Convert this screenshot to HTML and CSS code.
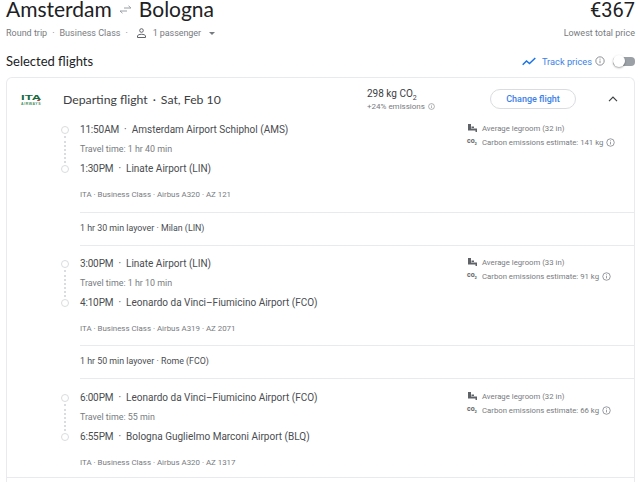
FILE: index.html
```html
<!DOCTYPE html>
<html lang="en">
<head>
    <meta charset="UTF-8" />
    <meta name="viewport" content="width=device-width, initial-scale=1.0"/>
    <title>Amsterdam to Bologna - Flights</title>
    <link rel="stylesheet" href="styles.css">
</head>
<body>

<svg class="defs" width="0" height="0" aria-hidden="true">
    <symbol id="info" viewBox="0 0 12 12">
        <circle cx="6" cy="6" r="5" fill="none" stroke="currentColor" stroke-width="1"/>
        <path d="M6 5.400v3.200M6 3.200v1.200" fill="none" stroke="currentColor" stroke-width="1"/>
    </symbol>
    <symbol id="seat" viewBox="0 0 9 8">
        <path d="M0 0h3v4.500h6V8H7.500V6.500H0z" fill="currentColor"/>
        <path d="M3.500 2.500H6V4H3.500z" fill="currentColor"/>
    </symbol>
</svg>

<header class="top-row">
    <h1 class="route">
        <span>Amsterdam</span>
        <svg class="swap" width="13" height="9" viewBox="0 0 13 9">
            <path d="M5 3h7M9.500.8 12 3M8 6H1M3.500 8.200 1 6" fill="none" stroke="#9aa0a6" stroke-width="1"/>
        </svg>
        <span>Bologna</span>
    </h1>
    <div class="price">€367</div>
</header>

<div class="sub-row">
    <div class="trip-opts">
        <span>Round trip</span><span class="dot">·</span>
        <span>Business Class</span><span class="dot">·</span>
        <svg class="person" width="9" height="10" viewBox="0 0 9 10">
            <circle cx="4.500" cy="2.500" r="1.800" fill="none" stroke="#5f6368" stroke-width="1"/>
            <path d="M.5 9.500V8c0-1 2-1.700 4-1.700s4 .7 4 1.700v1.500z" fill="none" stroke="#5f6368" stroke-width="1"/>
        </svg>
        <span class="pax">1 passenger</span>
        <span class="caret"></span>
    </div>
    <div>Lowest total price</div>
</div>

<div class="section-row">
    <h2 class="section-title">Selected flights</h2>
    <div class="track">
        <svg width="14" height="9" viewBox="0 0 14 9">
            <path d="M.7 7.800 4.500 4l3 2.600L13.300 1" fill="none" stroke="#1a73e8" stroke-width="1.500"/>
        </svg>
        <span class="track-label">Track prices</span>
        <svg class="info-sm" width="10" height="10"><use href="#info"/></svg>
        <span class="toggle"><span class="knob"></span></span>
    </div>
</div>

<main class="card">
    <div class="card-head">
        <div class="logo">
            <div class="logo-ita">ITA<span class="logo-tip"></span></div>
            <div class="logo-sub">AIRWAYS</div>
        </div>
        <div class="head-title">Departing flight<span class="dot">·</span>Sat, Feb 10</div>
        <div class="emissions">
            <div class="co2-total">298 kg CO<sub>2</sub></div>
            <div class="co2-diff">+24% emissions <svg width="7" height="7"><use href="#info"/></svg></div>
        </div>
        <button class="change-btn">Change flight</button>
        <svg class="chevron" width="10" height="6" viewBox="0 0 10 6">
            <path d="M1 5.200 5 1.200l4 4" fill="none" stroke="#3c4043" stroke-width="1.200"/>
        </svg>
    </div>

    <section class="leg">
        <div class="leg-main">
            <div class="timeline">
                <span class="stop"></span>
                <span class="dots"></span>
                <span class="stop"></span>
            </div>
            <div class="leg-text">
                <div class="place"><span class="time">11:50 AM</span><span class="dot">·</span>Amsterdam Airport Schiphol (AMS)</div>
                <div class="travel">Travel time: 1 hr 40 min</div>
                <div class="place"><span class="time">1:30 PM</span><span class="dot">·</span>Linate Airport (LIN)</div>
            </div>
            <div class="leg-info">
                <div class="info-row">
                    <svg class="info-ico" width="9" height="8"><use href="#seat"/></svg>Average legroom (32 in)
                </div>
                <div class="info-row">
                    <span class="co2-ico">co<sub>2</sub></span>Carbon emissions estimate: 141 kg
                    <svg class="info-sm" width="9" height="9"><use href="#info"/></svg>
                </div>
            </div>
        </div>
        <div class="leg-meta">ITA · Business Class · Airbus A320 · AZ 121</div>
    </section>

    <div class="layover">1 hr 30 min layover · Milan (LIN)</div>

    <section class="leg leg-mid">
        <div class="leg-main">
            <div class="timeline">
                <span class="stop"></span>
                <span class="dots"></span>
                <span class="stop"></span>
            </div>
            <div class="leg-text">
                <div class="place"><span class="time">3:00 PM</span><span class="dot">·</span>Linate Airport (LIN)</div>
                <div class="travel">Travel time: 1 hr 10 min</div>
                <div class="place"><span class="time">4:10 PM</span><span class="dot">·</span>Leonardo da Vinci–Fiumicino Airport (FCO)</div>
            </div>
            <div class="leg-info">
                <div class="info-row">
                    <svg class="info-ico" width="9" height="8"><use href="#seat"/></svg>Average legroom (33 in)
                </div>
                <div class="info-row">
                    <span class="co2-ico">co<sub>2</sub></span>Carbon emissions estimate: 91 kg
                    <svg class="info-sm" width="9" height="9"><use href="#info"/></svg>
                </div>
            </div>
        </div>
        <div class="leg-meta">ITA · Business Class · Airbus A319 · AZ 2071</div>
    </section>

    <div class="layover">1 hr 50 min layover · Rome (FCO)</div>

    <section class="leg leg-last">
        <div class="leg-main">
            <div class="timeline">
                <span class="stop"></span>
                <span class="dots"></span>
                <span class="stop"></span>
            </div>
            <div class="leg-text">
                <div class="place"><span class="time">6:00 PM</span><span class="dot">·</span>Leonardo da Vinci–Fiumicino Airport (FCO)</div>
                <div class="travel">Travel time: 55 min</div>
                <div class="place"><span class="time">6:55 PM</span><span class="dot">·</span>Bologna Guglielmo Marconi Airport (BLQ)</div>
            </div>
            <div class="leg-info">
                <div class="info-row">
                    <svg class="info-ico" width="9" height="8"><use href="#seat"/></svg>Average legroom (32 in)
                </div>
                <div class="info-row">
                    <span class="co2-ico">co<sub>2</sub></span>Carbon emissions estimate: 66 kg
                    <svg class="info-sm" width="9" height="9"><use href="#info"/></svg>
                </div>
            </div>
        </div>
        <div class="leg-meta">ITA · Business Class · Airbus A320 · AZ 1317</div>
    </section>

    <div class="card-foot"></div>
</main>

</body>
</html>
```

FILE: styles.css
```css
:root {
    --text: #202124;
    --body: #4a4d51;
    --dim: #777b80;
    --line: #e8eaed;
    --blue: #3b7fe8;
}

* {
    box-sizing: border-box;
    margin: 0;
    padding: 0;
}

html, body {
    width: 100%;
    height: 482px;
    overflow: hidden;
    background: #fff;
    font-family: Roboto, Arial, sans-serif;
    color: var(--text);
}

body {
    padding: 0 5px 0 6px;
}

.defs {
    display: block;
    height: 0;
}

.dot {
    margin: 0 5px;
}

/* top rows */
.top-row {
    display: flex;
    justify-content: space-between;
    align-items: flex-start;
    height: 22px;
}

.route {
    display: flex;
    align-items: center;
    gap: 7px;
    font-family: Lato, Roboto, sans-serif;
    font-size: 21px;
    font-weight: 400;
    line-height: 18px;
}

.price {
    font-size: 20px;
    line-height: 21px;
}

.sub-row {
    display: flex;
    justify-content: space-between;
    margin-top: 5px;
    height: 12px;
    font-size: 9px;
    line-height: 12px;
    color: var(--dim);
}

.trip-opts {
    display: flex;
    align-items: center;
}

.person {
    margin: 0 7px 0 4px;
}

.pax {
    letter-spacing: -0.1px;
}

.caret {
    margin-left: 8px;
    border-left: 3px solid transparent;
    border-right: 3px solid transparent;
    border-top: 3px solid var(--dim);
}

.section-row {
    display: flex;
    justify-content: space-between;
    align-items: center;
    margin-top: 13px;
    height: 18px;
}

.section-title {
    font-family: Lato, Roboto, sans-serif;
    font-size: 13px;
    font-weight: 400;
}

.track {
    display: flex;
    align-items: center;
    font-size: 9.250px;
    color: var(--blue);
}

.track-label {
    margin: 0 3px 0 6px;
}

.info-sm {
    color: var(--dim);
    flex: none;
}

.toggle {
    position: relative;
    display: block;
    width: 22px;
    height: 9px;
    margin-left: 8px;
    border-radius: 4px;
    background: #9aa0a6;
}

.knob {
    position: absolute;
    left: 0;
    top: -2px;
    width: 12px;
    height: 12px;
    border-radius: 50%;
    background: #fff;
    box-shadow: 0 1px 2px rgba(0,0,0,0.35);
}

/* card */
.card {
    margin-top: 7px;
    border: 1px solid var(--line);
    border-bottom: none;
    border-radius: 6px 6px 0 0;
}

.card-head {
    display: flex;
    align-items: center;
    height: 35px;
    padding-top: 7px;
}

.logo {
    width: 56px;
    padding: 3px 0 0 14px;
    color: #0f6b3a;
}

.logo-ita {
    position: relative;
    width: 12px;
    font-family: "Liberation Sans", sans-serif;
    font-size: 7.500px;
    font-weight: 700;
    line-height: 6px;
    transform: scaleX(1.75);
    transform-origin: left center;
}

.logo-tip {
    position: absolute;
    right: 1.500px;
    bottom: 0;
    border-left: 1px solid transparent;
    border-right: 1px solid transparent;
    border-bottom: 2px solid #d0312d;
}

.logo-sub {
    margin-top: 1px;
    font-family: "Liberation Sans", sans-serif;
    font-size: 3.500px;
    font-weight: 700;
    line-height: 5px;
    letter-spacing: 0.600px;
    color: #3f8f5c;
}

.head-title {
    width: 304px;
    font-family: Lato, Roboto, sans-serif;
    font-size: 12.250px;
    color: #3c4043;
}

.emissions {
    width: 123px;
    font-size: 9px;
}

.co2-total {
    font-size: 10px;
    line-height: 13px;
    color: #3c4043;
}

.co2-total sub {
    font-size: 7px;
    line-height: 0;
}

.co2-diff {
    display: flex;
    align-items: center;
    gap: 3px;
    margin-top: 2px;
    font-size: 8px;
    color: var(--dim);
}

.change-btn {
    width: 86px;
    height: 20px;
    border: 1px solid #dadce0;
    border-radius: 10px;
    background: #fff;
    font-family: Roboto, sans-serif;
    font-size: 9px;
    font-weight: 500;
    color: var(--blue);
}

.chevron {
    margin-left: 32px;
}

/* legs */
.leg {
    margin-left: 73px;
    padding-top: 10px;
    border-bottom: 1px solid var(--line);
    height: 100px;
}

.leg-mid {
    padding-top: 11px;
}

.leg-last {
    height: 98px;
    padding-top: 12px;
    border-bottom: none;
}

.leg-main {
    display: flex;
    margin-left: -19px;
}

.timeline {
    display: flex;
    flex-direction: column;
    align-items: center;
    width: 19px;
    padding: 3px 11px 0 0;
}

.stop {
    width: 8px;
    height: 8px;
    flex: none;
    border: 1px solid #dadce0;
    border-radius: 50%;
}

.dots {
    width: 0;
    height: 27px;
    margin: 2px 0;
    border-left: 2px dotted #dadce0;
}

.leg-text {
    width: 387px;
}

.place {
    height: 20px;
    font-size: 10px;
    line-height: 14px;
    color: var(--body);
}

.time {
    letter-spacing: -0.2px;
    word-spacing: -2px;
}

.travel {
    height: 19px;
    font-size: 8.900px;
    line-height: 12px;
    color: var(--dim);
}

.leg-info {
    margin-top: -2px;
    font-size: 7.750px;
    color: var(--dim);
}

.info-row {
    display: flex;
    align-items: center;
    height: 14px;
    white-space: nowrap;
}

.info-ico {
    margin: 0 5px 0 1px;
    flex: none;
    color: #5f6368;
}

.co2-ico {
    width: 15px;
    flex: none;
    font-size: 7px;
    font-weight: 700;
    color: #5f6368;
}

.co2-ico sub {
    font-size: 4px;
}

.leg-info .info-sm {
    margin-left: 3px;
}

.leg-meta {
    margin-top: 7px;
    font-size: 7.900px;
    line-height: 12px;
    color: var(--dim);
}

.layover {
    margin-left: 73px;
    height: 33px;
    border-bottom: 1px solid var(--line);
    font-size: 8.850px;
    line-height: 30px;
    color: var(--body);
}

.card-foot {
    height: 10px;
    border-top: 1px solid var(--line);
}
```
